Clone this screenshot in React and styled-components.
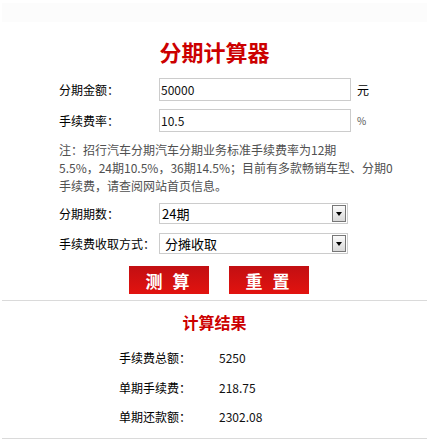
import React from 'react';
import styled, { createGlobalStyle } from 'styled-components';

const GlobalStyle = createGlobalStyle`
  body {
    margin: 0;
    background: #fff;
    font-family: "Noto Sans CJK SC", "Liberation Sans", sans-serif;
    font-size: 12px;
    color: #000;
  }
`;

const Page = styled.div`
  padding: 3px 2px 0;
  width: 425px;
`;

const TopBand = styled.div`
  height: 19px;
  background: #fcfcfc;
`;

const Title = styled.h1`
  margin: 14px 0 12px;
  font-size: 22px;
  line-height: 30px;
  font-weight: bold;
  text-align: center;
  color: #cc0000;
`;

const Form = styled.div`
  padding-left: 57px;
`;

const Row = styled.div`
  display: flex;
  align-items: center;
  margin-top: ${(p) => p.$top || 0}px;
`;

const Label = styled.label`
  width: 100px;
  flex-shrink: 0;
  font-size: 12px;
  line-height: 16px;
`;

const TextInput = styled.input`
  box-sizing: border-box;
  width: 192px;
  height: 23px;
  margin: 0;
  padding: 0 1px;
  border: 1px solid #cccccc;
  font-family: "Noto Sans CJK SC", sans-serif;
  font-size: 12px;
  color: #111;
  outline: none;
`;

const Unit = styled.span`
  margin-left: 6px;
  font-size: ${(p) => (p.$small ? '10px' : '12px')};
  color: ${(p) => (p.$small ? '#555' : '#000')};
`;

const Note = styled.p`
  margin: 9px 0 0;
  font-size: 12px;
  line-height: 18px;
  color: #505050;
`;

const SelectBox = styled.div`
  box-sizing: border-box;
  width: 189px;
  height: 21px;
  display: flex;
  align-items: center;
  border: 1px solid #cccccc;
  background: #fff;
`;

const Select = styled.select`
  flex: 1;
  height: 100%;
  min-width: 0;
  margin: 0;
  padding: 0 0 0 ${(p) => p.$pad || 2}px;
  border: none;
  background: transparent;
  appearance: none;
  font-family: "Noto Sans CJK SC", sans-serif;
  font-size: 13px;
  color: #000;
  outline: none;
`;

const ArrowButton = styled.span`
  box-sizing: border-box;
  width: 14px;
  height: 17px;
  margin-right: 1px;
  display: flex;
  align-items: center;
  justify-content: center;
  border: 1px solid #777;
  background: linear-gradient(#fbfbfb, #d8d8d8);

  &::after {
    content: '';
    border-left: 3.5px solid transparent;
    border-right: 3.5px solid transparent;
    border-top: 4px solid #000;
  }
`;

const Buttons = styled.div`
  display: flex;
  gap: 20px;
  margin-top: 12px;
  padding-left: 127px;
`;

const RedButton = styled.button`
  width: 80px;
  height: 28px;
  margin: 0;
  padding: 0;
  border: none;
  background: linear-gradient(#c20f12, #e2130f);
  color: #fff;
  font-family: "Noto Sans CJK SC", sans-serif;
  font-size: 17px;
  font-weight: bold;
  letter-spacing: 3px;
  cursor: pointer;
`;

const Divider = styled.hr`
  margin: ${(p) => p.$top}px 0 0;
  border: none;
  border-top: 1px solid #dadada;
  height: 0;
`;

const ResultTitle = styled.h2`
  margin: 9px 0 9px;
  font-size: 16px;
  line-height: 24px;
  font-weight: bold;
  text-align: center;
  color: #cc0000;
`;

const ResultRow = styled.div`
  display: flex;
  padding-left: 117px;
  line-height: 29.5px;
  font-size: 12px;
`;

const ResultLabel = styled.span`
  width: 100px;
`;

const ResultValue = styled.span`
  color: #111;
`;

const results = [
  ['手续费总额：', '5250'],
  ['单期手续费：', '218.75'],
  ['单期还款额：', '2302.08'],
];

const App = () => {
  return (
    <>
      <GlobalStyle />
      <Page>
        <TopBand />
        <Title>分期计算器</Title>
        <Form>
          <Row>
            <Label>分期金额：</Label>
            <TextInput defaultValue="50000" />
            <Unit>元</Unit>
          </Row>
          <Row $top={8}>
            <Label>手续费率：</Label>
            <TextInput defaultValue="10.5" />
            <Unit $small>%</Unit>
          </Row>
          <Note>
            注：招行汽车分期汽车分期业务标准手续费率为12期
            <br />
            5.5%，24期10.5%，36期14.5%；目前有多款畅销车型、分期0
            <br />
            手续费，请查阅网站首页信息。
          </Note>
          <Row $top={8}>
            <Label>分期期数：</Label>
            <SelectBox>
              <Select defaultValue="24">
                <option value="12">12期</option>
                <option value="24">24期</option>
                <option value="36">36期</option>
              </Select>
              <ArrowButton />
            </SelectBox>
          </Row>
          <Row $top={9}>
            <Label>手续费收取方式：</Label>
            <SelectBox>
              <Select $pad={5} defaultValue="fen">
                <option value="fen">分摊收取</option>
                <option value="yi">一次性收取</option>
              </Select>
              <ArrowButton />
            </SelectBox>
          </Row>
        </Form>
        <Buttons>
          <RedButton>测 算</RedButton>
          <RedButton>重 置</RedButton>
        </Buttons>
        <Divider $top={6} />
        <ResultTitle>计算结果</ResultTitle>
        {results.map(([label, value]) => (
          <ResultRow key={label}>
            <ResultLabel>{label}</ResultLabel>
            <ResultValue>{value}</ResultValue>
          </ResultRow>
        ))}
        <Divider $top={6} />
      </Page>
    </>
  );
};

export default App;
